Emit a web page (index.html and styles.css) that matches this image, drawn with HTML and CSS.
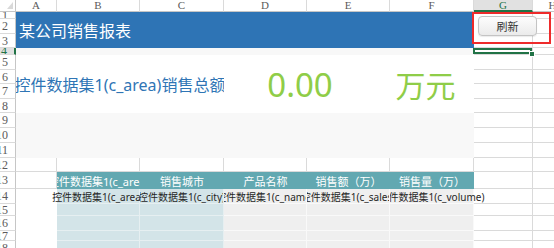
FILE: index.html
```html
<!DOCTYPE html>
<html>
<head>
  <meta charset="utf-8">
  <title>某公司销售报表</title>
  <link rel="stylesheet" href="styles.css">
</head>
<body>
  <div class="sheet">
    <!-- column headers -->
    <div class="corner"><span class="corner-mark"></span></div>
    <div class="colhead">A</div>
    <div class="colhead">B</div>
    <div class="colhead">C</div>
    <div class="colhead">D</div>
    <div class="colhead">E</div>
    <div class="colhead">F</div>
    <div class="colhead active">G</div>
    <div class="colhead">H</div>

    <!-- rows 1-3: banner -->
    <div class="rowhead">1</div>
    <div class="banner">某公司销售报表</div>
    <div class="cell tools">
      <button class="refresh">刷新</button>
      <div class="focus-frame"></div>
    </div>
    <div class="cell"></div>
    <div class="rowhead">2</div>
    <div class="cell"></div>
    <div class="rowhead">3</div>
    <div class="cell"></div>

    <!-- row 4 -->
    <div class="rowhead active">4</div>
    <div class="fill-row"></div>
    <div class="cell sel"></div>
    <div class="cell"></div>

    <!-- rows 5-8: total -->
    <div class="rowhead">5</div>
    <div class="metric-label">控件数据集1(c_area)销售总额</div>
    <div class="metric-value">0.00</div>
    <div class="metric-unit">万元</div>
    <div class="cell"></div>
    <div class="cell"></div>
    <div class="rowhead">6</div>
    <div class="cell"></div>
    <div class="cell"></div>
    <div class="rowhead">7</div>
    <div class="cell"></div>
    <div class="cell"></div>
    <div class="rowhead">8</div>
    <div class="cell"></div>
    <div class="cell"></div>

    <!-- rows 9-11: spacer -->
    <div class="rowhead">9</div>
    <div class="fill-block"></div>
    <div class="cell"></div>
    <div class="cell"></div>
    <div class="rowhead">10</div>
    <div class="cell"></div>
    <div class="cell"></div>
    <div class="rowhead">11</div>
    <div class="cell"></div>
    <div class="cell"></div>

    <!-- row 12 -->
    <div class="rowhead">12</div>
    <div class="cell"></div>
    <div class="cell"></div>
    <div class="cell"></div>
    <div class="cell"></div>
    <div class="cell"></div>
    <div class="cell"></div>
    <div class="cell"></div>
    <div class="cell"></div>

    <!-- row 13: table head -->
    <div class="rowhead">13</div>
    <div class="cell"></div>
    <div class="th">控件数据集1(c_area)</div>
    <div class="th">销售城市</div>
    <div class="th">产品名称</div>
    <div class="th">销售额（万）</div>
    <div class="th">销售量（万）</div>
    <div class="cell"></div>
    <div class="cell"></div>

    <!-- row 14: data -->
    <div class="rowhead">14</div>
    <div class="blank"></div>
    <div class="td key spill-left">控件数据集1(c_area)</div>
    <div class="td key">控件数据集1(c_city)</div>
    <div class="td">控件数据集1(c_name)</div>
    <div class="td">控件数据集1(c_sales)</div>
    <div class="td spill-right">控件数据集1(c_volume)</div>
    <div class="cell"></div>
    <div class="cell"></div>

    <div class="rowhead">15</div>
    <div class="blank"></div>
    <div class="td key"></div>
    <div class="td key"></div>
    <div class="td"></div>
    <div class="td"></div>
    <div class="td"></div>
    <div class="cell"></div>
    <div class="cell"></div>

    <div class="rowhead">16</div>
    <div class="blank"></div>
    <div class="td key"></div>
    <div class="td key"></div>
    <div class="td"></div>
    <div class="td"></div>
    <div class="td"></div>
    <div class="cell"></div>
    <div class="cell"></div>

    <div class="rowhead">17</div>
    <div class="blank"></div>
    <div class="td key"></div>
    <div class="td key"></div>
    <div class="td"></div>
    <div class="td"></div>
    <div class="td"></div>
    <div class="cell"></div>
    <div class="cell"></div>

    <div class="rowhead">18</div>
    <div class="blank"></div>
    <div class="td key"></div>
    <div class="td key"></div>
    <div class="td"></div>
    <div class="td"></div>
    <div class="td"></div>
    <div class="cell"></div>
    <div class="cell"></div>
  </div>
</body>
</html>
```

FILE: styles.css
```css
body {
    margin: 0;
    overflow: hidden;
    background-color: white;
}

.sheet {
    display: grid;
    grid-template-columns: 16px 41px 83px 84px 83px 83px 84px 59px 40px;
    grid-template-rows: 12px 7px 15px 14px 7px 15px 14px 15px 14px 15px 15px 15px 14px 17px 15px 12px 15px 10px 15px;
    font-family: "Noto Sans", "Noto Sans CJK SC", sans-serif;
}

.sheet > div {
    box-sizing: border-box;
    min-width: 0;
    min-height: 0;
}

/* headers */

.corner {
    display: flex;
    justify-content: flex-end;
    align-items: flex-end;
    padding: 0 2px 2px 0;
    border-right: 1px solid #c6c6c6;
    border-bottom: 1px solid #c6c6c6;
}

.corner-mark {
    width: 0;
    height: 0;
    border-left: 6px solid transparent;
    border-bottom: 7px solid #d9d9d9;
}

.colhead {
    display: flex;
    align-items: center;
    justify-content: center;
    overflow: hidden;
    border-right: 1px solid #dadada;
    border-bottom: 1px solid #c6c6c6;
    font: 11px/1 "Liberation Serif", serif;
    color: #5b5b5b;
}

.colhead.active {
    background-color: #e1e1e1;
    color: #217346;
    border-bottom: 2px solid #217346;
}

.rowhead {
    display: flex;
    align-items: center;
    justify-content: flex-end;
    padding-right: 7px;
    overflow: hidden;
    white-space: nowrap;
    border-right: 1px solid #c6c6c6;
    border-bottom: 1px solid #dadada;
    font: 12px/1 "Liberation Serif", serif;
    color: #5b5b5b;
}

.rowhead.active {
    background-color: #e1e1e1;
    color: #217346;
    border-right: 2px solid #217346;
}

/* plain cells */

.cell {
    border-right: 1px solid #dadada;
    border-bottom: 1px solid #dadada;
}

.fill-row {
    grid-column: span 6;
    background-color: #f8f8f8;
}

.fill-block {
    grid-column: span 6;
    grid-row: span 3;
    background-color: #f8f8f8;
}

.sel {
    position: relative;
}

.sel::after {
    content: "";
    position: absolute;
    left: -1px;
    top: 0;
    right: 0;
    bottom: 0;
    border: 2px solid #217346;
    z-index: 2;
}

.sel::before {
    content: "";
    position: absolute;
    right: -3px;
    bottom: -3px;
    width: 4px;
    height: 4px;
    background-color: #217346;
    border: 1px solid white;
    z-index: 3;
}

/* banner */

.banner {
    grid-column: span 6;
    grid-row: span 3;
    display: flex;
    align-items: center;
    padding-left: 3px;
    background-color: #2e74b5;
    color: white;
    font-size: 16px;
}

.tools {
    grid-row: span 3;
    position: relative;
}

.refresh {
    position: absolute;
    left: 4px;
    top: 4px;
    width: 59px;
    height: 20px;
    padding: 0;
    border: 1px solid #c4c4c4;
    border-radius: 4px;
    background: linear-gradient(#fdfdfd, #ebebeb);
    box-shadow: 0 1px 1px rgba(0, 0, 0, 0.08);
    font: 11px "Noto Sans CJK SC", sans-serif;
    color: #333;
    z-index: 2;
}

.focus-frame {
    position: absolute;
    left: -2px;
    top: 0;
    width: 79px;
    height: 32px;
    box-sizing: border-box;
    border: 2px solid #ee2b2b;
    z-index: 3;
}

/* total */

.metric-label,
.metric-value,
.metric-unit {
    grid-row: span 4;
    display: flex;
    align-items: center;
    justify-content: center;
    overflow: hidden;
    white-space: nowrap;
}

.metric-label {
    grid-column: span 3;
    color: #2f75b5;
    font-size: 16px;
}

.metric-value {
    grid-column: span 2;
    padding-right: 14px;
    color: #8fcd48;
    font-size: 33px;
}

.metric-unit {
    padding-right: 13px;
    color: #8fcd48;
    font-size: 30px;
}

/* table */

.th {
    display: flex;
    align-items: center;
    justify-content: center;
    overflow: hidden;
    white-space: nowrap;
    background-color: #62a8b1;
    color: white;
    font-size: 11px;
}

.td {
    display: flex;
    align-items: center;
    justify-content: center;
    overflow: hidden;
    white-space: nowrap;
    background-color: #efefef;
    border-right: 1px solid #f9f9f9;
    border-bottom: 1px solid #f9f9f9;
    color: #262626;
    font-size: 10px;
}

.td.key {
    background-color: #d3e4e8;
    border-color: #e6eff1;
}

.td.spill-left {
    overflow: visible;
    clip-path: inset(0 0 0 -12px);
}

.td.spill-right {
    overflow: visible;
    clip-path: inset(0 -80px 0 0);
}
```
